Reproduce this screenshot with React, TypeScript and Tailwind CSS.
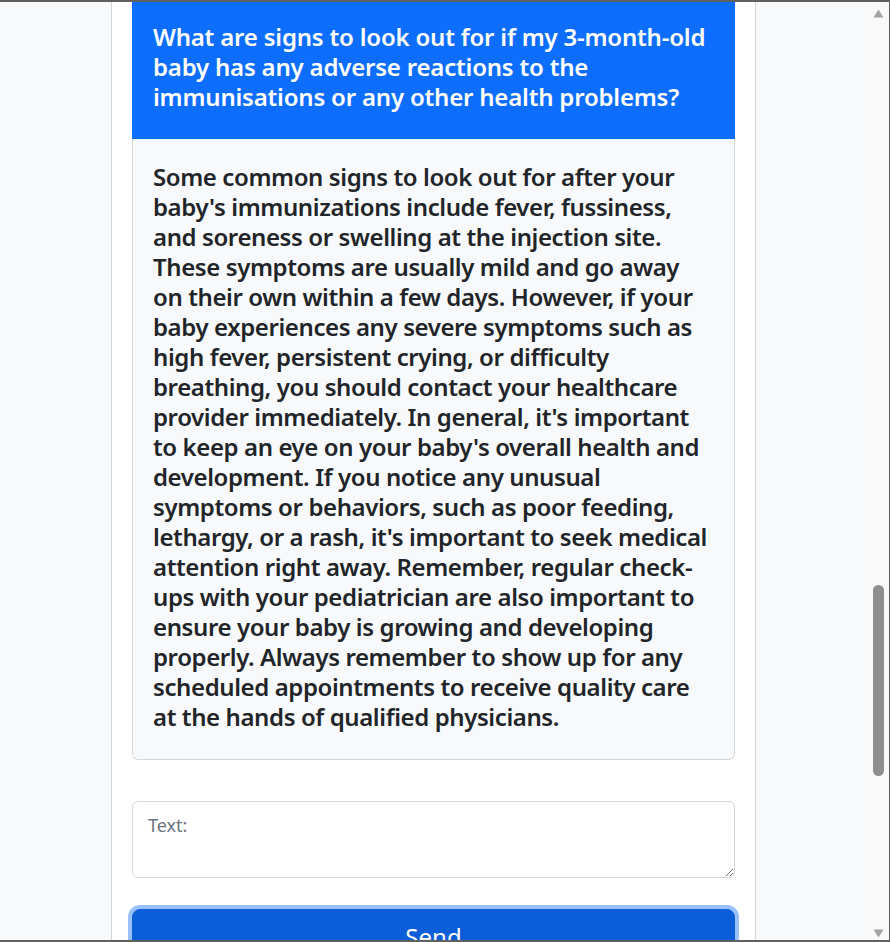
const question = [
  'What are signs to look out for if my 3-month-old',
  'baby has any adverse reactions to the',
  'immunisations or any other health problems?',
];

const answer = [
  'Some common signs to look out for after your',
  "baby's immunizations include fever, fussiness,",
  'and soreness or swelling at the injection site.',
  'These symptoms are usually mild and go away',
  'on their own within a few days. However, if your',
  'baby experiences any severe symptoms such as',
  'high fever, persistent crying, or difficulty',
  'breathing, you should contact your healthcare',
  "provider immediately. In general, it's important",
  "to keep an eye on your baby's overall health and",
  'development. If you notice any unusual',
  'symptoms or behaviors, such as poor feeding,',
  "lethargy, or a rash, it's important to seek medical",
  'attention right away. Remember, regular check-',
  'ups with your pediatrician are also important to',
  'ensure your baby is growing and developing',
  'properly. Always remember to show up for any',
  'scheduled appointments to receive quality care',
  'at the hands of qualified physicians.',
];

const font = { fontFamily: '"Noto Sans", "Open Sans", sans-serif' };

export default function App() {
  return (
    <div
      className="w-[890px] h-[942px] overflow-hidden flex border-t-2 border-b-2 border-r border-[#606060] bg-[#f8f9fa]"
      style={font}
    >
      {/* page */}
      <div className="flex-1 flex justify-center overflow-hidden bg-[#f8f9fa]">
        <div className="w-[645px] h-full shrink-0 bg-white border-x border-[#d3d6d9] px-5 flex flex-col">
          {/* card */}
          <div className="shrink-0 rounded-b-[6px] overflow-hidden">
            <div className="bg-[#0d6efd] px-[21px] pt-5 pb-[27px] text-white text-[24px] leading-[30px] font-semibold tracking-[-0.2px]">
              {question.map((l) => (
                <div key={l} className="whitespace-nowrap">{l}</div>
              ))}
            </div>
            <div className="bg-[#f8f9fa] border-x border-b border-[#d3d6d9] rounded-b-[6px] px-5 pt-[23px] pb-[27px] text-[#212529] text-[24px] leading-[30px] font-semibold tracking-[-0.4px]">
              {answer.map((l) => (
                <div key={l} className="whitespace-nowrap">{l}</div>
              ))}
            </div>
          </div>

          {/* textarea */}
          <div className="shrink-0 mt-[41px]">
            <textarea
              placeholder="Text:"
              className="block w-full h-[77px] resize-y rounded-[6px] border border-[#d3d6d9] bg-white px-[15px] py-[10px] text-[18px] leading-[27px] text-[#212529] placeholder:text-[#6c757d] outline-none"
              style={font}
            />
          </div>

          {/* button */}
          <div className="shrink-0 mt-[31px]">
            <button
              className="w-full rounded-[8px] border border-[#0b5ed7] bg-[#0b5ed7] pt-[9px] pb-[9px] text-white text-[24px] leading-[36px] ring-4 ring-[#98c1fe]"
              style={font}
            >
              Send
            </button>
          </div>
        </div>
      </div>

      {/* scrollbar */}
      <div className="w-[22px] h-full bg-[#f9f9f9] relative shrink-0">
        <svg className="absolute left-[6px] top-[7px]" width="11" height="9" viewBox="0 0 11 9">
          <polygon points="5.5,0.5 10.5,8.5 0.5,8.5" fill="#a3a3a3" />
        </svg>
        <div className="absolute left-[6px] top-[583px] w-[11px] h-[191px] rounded-full bg-[#8e8e8e]" />
        <svg className="absolute left-[6px] top-[927px]" width="11" height="9" viewBox="0 0 11 9">
          <polygon points="0.5,0.5 10.5,0.5 5.5,8.5" fill="#a3a3a3" />
        </svg>
      </div>
    </div>
  );
}
